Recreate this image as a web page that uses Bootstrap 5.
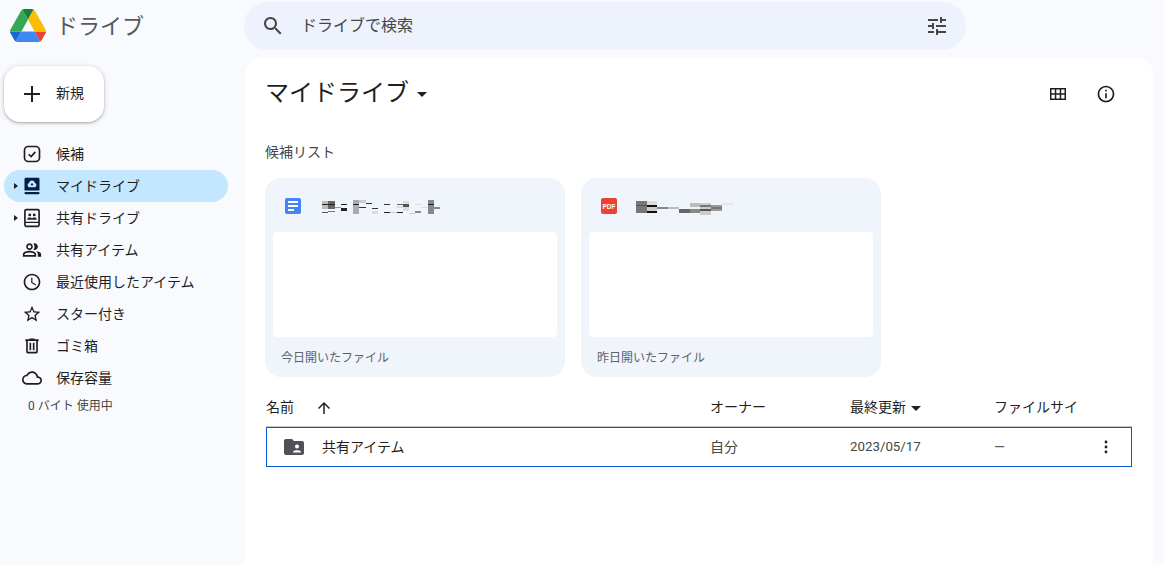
<!DOCTYPE html>
<html lang="ja"><head><meta charset="utf-8"><title>ドライブ</title>
<link href="https://cdn.jsdelivr.net/npm/bootstrap@5.3.0/dist/css/bootstrap.min.css" rel="stylesheet">
<style>
html,body{height:100%;overflow:hidden}
body{background:#f8fafd;color:#1f1f1f;font-family:Roboto,"Noto Sans CJK JP",sans-serif;font-size:14px}
.shell{height:565px;width:1164px}
.topbar{height:58px}
.brand{width:244px;padding-left:10px;padding-bottom:8px}
.brand-name{font-size:22px;color:#555a5f;margin:3px 0 0 10px;line-height:32px}
.searchbar{width:722px;height:48px;margin-top:-6px;background:#edf2fc;border-radius:24px;padding:0 17px 0 17px;color:#444746;font-size:16px}
.searchbar .hint{margin-left:16px;flex:1}
.bodyrow{height:507px}
.sidenav{width:245px;flex:none}
.newbtn{margin:8px 0 16px 4px;width:100px;height:56px;background:#fff;border-radius:16px;box-shadow:0 1px 2px rgba(60,64,67,.3),0 1px 4px 1px rgba(60,64,67,.15);font-size:14px;color:#1f1f1f;padding-left:18px;gap:14px}
.newbtn span{margin-top:-1px}
.sidelink{height:32px;width:224px;margin-left:4px;border-radius:16px;position:relative;padding-left:18px;gap:14px;color:#1f1f1f;text-decoration:none}
.sidelink.on{background:#c2e7ff}
.sideicon{width:20px;height:20px;flex:none;fill:#1f1f1f}
.expander{position:absolute;left:10px;top:13px;width:0;height:0;border-left:4px solid #1f1f1f;border-top:3.5px solid transparent;border-bottom:3.5px solid transparent}
.usage{font-size:12px;color:#444746;margin:3px 0 0 28px}
.panel{width:908px;background:#fff;border-radius:16px 16px 0 0;padding:0 21px;height:507px}
.headline{height:70px}
.headline h1{font-size:24px;font-weight:400;margin:0 0 0 -1px;line-height:70px;color:#1f1f1f}
.ddcaret{display:inline-block;border-top:5px solid #1f1f1f;border-left:5px solid transparent;border-right:5px solid transparent;margin-left:8px;vertical-align:middle}
.toolicons{gap:28px;margin-right:16px;padding-top:2px}
.toolicons svg{width:20px;height:20px;fill:#1f1f1f}
.seclabel{margin:13px 0 0 -1px;line-height:22px;color:#444746}
.cards{gap:16px;margin:15px 0 0 -1px}
.sugcard{width:300px;height:199px;background:#f0f4fb;border-radius:16px;padding:0 8px}
.cardhead{height:54px;padding:2px 0 0 12px}
.cardhead svg.fileicon{width:16px;height:16px;flex:none}
.cardhead svg.mosaic{margin:4px 0 0 21px;width:120px;height:16px}
.cardhead svg.mosaic.pdfmark{margin-left:19px}
.thumb{height:105px;background:#fff;border-radius:4px}
.cardfoot{font-size:12px;color:#5f6368;padding:13px 0 0 8px;line-height:16px}
.filegrid{display:grid;grid-template-columns:444px 140px 144px 1fr;align-items:center}
.listhead{margin-top:12px;height:38px;border-bottom:1px solid #c7c7c7;width:866px;color:#1f1f1f}
.listhead .sortarrow{width:18px;height:18px;fill:#1f1f1f;margin-left:21px}
.caretnear{margin-left:5px}
.listrow{width:866px;height:40px;border:1px solid #0b57d0;color:#444746}
.listrow .firstcell{padding-left:15px;gap:16px;color:#1f1f1f}
.folder{width:24px;height:24px;fill:#4f5256;flex:none}
.listrow .c2{margin-left:-1px}
.listrow .c3{margin-left:-1px;font-size:13.3px}
.dots{width:20px;height:20px;fill:#1f1f1f;margin-left:auto;margin-right:15px}
.dash{margin-left:-1px;color:#5f6368}
</style></head>
<body>
<div class="shell d-flex flex-column">
  <header class="topbar d-flex align-items-center">
    <div class="brand d-flex align-items-center">
      <svg width="36" height="33" viewBox="0 0 87.3 78" preserveAspectRatio="none"><path d="m6.6 66.85 3.85 6.65c.8 1.4 1.95 2.5 3.3 3.3l13.75-23.8h-27.5c0 1.55.4 3.1 1.2 4.5z" fill="#1967d2"/><path d="m43.65 25-13.75-23.8c-1.35.8-2.5 1.9-3.3 3.3l-25.4 44a9.06 9.06 0 0 0 -1.2 4.5h27.5z" fill="#34a853"/><path d="m73.55 76.8c1.35-.8 2.5-1.9 3.3-3.3l1.6-2.75 7.65-13.25c.8-1.4 1.2-2.95 1.2-4.5h-27.502l5.852 11.5z" fill="#ea4335"/><path d="m43.65 25 13.75-23.8c-1.35-.8-2.9-1.2-4.5-1.2h-18.5c-1.6 0-3.15.45-4.5 1.2z" fill="#188038"/><path d="m59.8 53h-32.3l-13.75 23.8c1.35.8 2.9 1.2 4.5 1.2h50.8c1.6 0 3.15-.45 4.5-1.2z" fill="#4285f4"/><path d="m73.4 26.5-12.7-22c-.8-1.4-1.95-2.5-3.3-3.3l-13.75 23.8 16.15 28h27.45c0-1.55-.4-3.1-1.2-4.5z" fill="#fbbc04"/></svg>
      <span class="brand-name">ドライブ</span>
    </div>
    <div class="searchbar d-flex align-items-center">
      <svg width="24" height="24" viewBox="0 0 24 24" fill="#444746"><path d="M15.5 14h-.79l-.28-.27C15.41 12.59 16 11.11 16 9.5 16 5.91 13.09 3 9.5 3S3 5.91 3 9.5 5.91 16 9.5 16c1.61 0 3.09-.59 4.23-1.57l.27.28v.79l5 4.99L20.49 19l-4.99-5zm-6 0C7.01 14 5 11.99 5 9.5S7.01 5 9.5 5 14 7.01 14 9.5 11.99 14 9.5 14z"/></svg>
      <span class="hint">ドライブで検索</span>
      <svg width="24" height="24" viewBox="0 0 24 24" fill="#444746"><path d="M3 17v2h6v-2H3zM3 5v2h10V5H3zm10 16v-2h8v-2h-8v-2h-2v6h2zM7 9v2H3v2h4v2h2V9H7zm14 4v-2H11v2h10zm-6-4h2V7h4V5h-4V3h-2v6z"/></svg>
    </div>
  </header>
  <div class="bodyrow d-flex">
    <aside class="sidenav">
      <div class="newbtn d-flex align-items-center">
        <svg width="20" height="20" viewBox="0 0 20 20"><path d="M10 2v16M2 10h16" stroke="#1f1f1f" stroke-width="2" fill="none"/></svg>
        <span>新規</span>
      </div>
      <nav class="d-flex flex-column">
        <a class="sidelink d-flex align-items-center" href="#"><svg class="sideicon" viewBox="0 0 24 24"><rect x="3" y="3" width="18" height="18" rx="4.500" fill="none" stroke="#1f1f1f" stroke-width="2"/><path d="M8 12.500l3 2.700 5-5.700" fill="none" stroke="#1f1f1f" stroke-width="2"/></svg><span>候補</span></a>
        <a class="sidelink on d-flex align-items-center" href="#"><span class="expander"></span><svg class="sideicon" viewBox="0 0 24 24"><path d="M3 3.500C3 2.700 3.700 2 4.500 2h15c.8 0 1.500.7 1.500 1.500V17.500H3z" fill="#041e49"/><rect x="3" y="19.300" width="18" height="2.500" rx="1" fill="#041e49"/><path d="M12 5.500c2 0 3.300 1.500 3.500 3 1.200.4 1.800 1.400 1.800 2.500 0 1.500-1.200 2.500-2.500 2.500H9.200C7.800 13.500 6.700 12.500 6.700 11c0-1.200.7-2.100 1.800-2.500.2-1.500 1.500-3 3.500-3z" fill="#c2e7ff"/><path d="M12 8l1.800 3.200h-3.600z" fill="#041e49"/></svg><span>マイドライブ</span></a>
        <a class="sidelink d-flex align-items-center" href="#"><span class="expander"></span><svg class="sideicon" viewBox="0 0 24 24"><rect x="3.500" y="2" width="17" height="20" rx="1.500" fill="none" stroke="#1f1f1f" stroke-width="2"/><circle cx="9.300" cy="8.300" r="1.700"/><circle cx="14.700" cy="8.300" r="1.700"/><path d="M6.500 13c0-2 5.500-2 5.500 0 0-2 5.500-2 5.500 0v1.200h-11zM4 16.500h16v1.600H4z"/></svg><span>共有ドライブ</span></a>
        <a class="sidelink d-flex align-items-center" href="#"><svg class="sideicon" viewBox="0 0 24 24"><path d="M16.670 13.130C18.040 14.060 19 15.320 19 17v3h4v-3c0-2.180-3.570-3.470-6.330-3.870zM15 12c2.210 0 4-1.790 4-4s-1.790-4-4-4c-.47 0-.91.1-1.330.24C14.500 5.270 15 6.580 15 8s-.5 2.730-1.330 3.760c.42.14.86.24 1.330.24zM9 12c2.210 0 4-1.790 4-4s-1.790-4-4-4-4 1.790-4 4 1.790 4 4 4zm0-6c1.100 0 2 .9 2 2s-.9 2-2 2-2-.9-2-2 .9-2 2-2zM9 13c-2.670 0-8 1.340-8 4v3h16v-3c0-2.660-5.330-4-8-4zm6 5H3v-.99C3.200 16.290 6.300 15 9 15s5.800 1.290 6 2v1z"/></svg><span>共有アイテム</span></a>
        <a class="sidelink d-flex align-items-center" href="#"><svg class="sideicon" viewBox="0 0 24 24"><path d="M11.990 2C6.470 2 2 6.480 2 12s4.470 10 9.990 10C17.520 22 22 17.520 22 12S17.520 2 11.990 2zM12 20c-4.420 0-8-3.580-8-8s3.580-8 8-8 8 3.580 8 8-3.580 8-8 8zm.5-13H11v6l5.250 3.150.75-1.230-4.500-2.670z"/></svg><span>最近使用したアイテム</span></a>
        <a class="sidelink d-flex align-items-center" href="#"><svg class="sideicon" viewBox="0 0 24 24"><path d="M22 9.240l-7.190-.62L12 2 9.190 8.630 2 9.240l5.460 4.730L5.820 21 12 17.270 18.180 21l-1.630-7.030L22 9.240zM12 15.400l-3.760 2.270 1-4.280-3.320-2.880 4.380-.38L12 6.100l1.710 4.040 4.380.38-3.320 2.880 1 4.280L12 15.400z"/></svg><span>スター付き</span></a>
        <a class="sidelink d-flex align-items-center" href="#"><svg class="sideicon" viewBox="0 0 24 24"><path d="M15 4V3H9v1H4v2h1v13c0 1.100.9 2 2 2h10c1.100 0 2-.9 2-2V6h1V4h-5zm2 15H7V6h10v13zM9 8h2v9H9zm4 0h2v9h-2z"/></svg><span>ゴミ箱</span></a>
        <a class="sidelink d-flex align-items-center" href="#"><svg class="sideicon" viewBox="0 0 24 24"><path d="M19.350 10.040C18.670 6.590 15.640 4 12 4 9.110 4 6.600 5.640 5.350 8.040 2.340 8.360 0 10.910 0 14c0 3.310 2.690 6 6 6h13c2.760 0 5-2.240 5-5 0-2.640-2.050-4.780-4.650-4.960zM19 18H6c-2.210 0-4-1.790-4-4 0-2.050 1.530-3.760 3.560-3.970l1.070-.11.5-.95C8.080 7.140 9.940 6 12 6c2.620 0 4.880 1.860 5.390 4.430l.3 1.500 1.530.11c1.560.1 2.780 1.410 2.780 2.960 0 1.650-1.350 3-3 3z"/></svg><span>保存容量</span></a>
      </nav>
      <div class="usage">0 バイト 使用中</div>
    </aside>
    <main class="panel">
      <div class="headline d-flex align-items-center justify-content-between">
        <h1>マイドライブ<span class="ddcaret"></span></h1>
        <div class="toolicons d-flex align-items-center">
          <svg viewBox="0 0 20 20"><path d="M2 4h16v12H2zM3.500 5.500v3.700h3.300V5.500zm4.800 0v3.700h3.400V5.500zm4.900 0v3.700h3.300V5.500zM3.500 10.800v3.700h3.300v-3.700zm4.800 0v3.700h3.400v-3.700zm4.900 0v3.700h3.300v-3.700z" fill-rule="evenodd"/></svg>
          <svg viewBox="0 0 24 24"><path d="M11 7h2v2h-2zm0 4h2v6h-2zm1-9C6.480 2 2 6.480 2 12s4.480 10 10 10 10-4.480 10-10S17.520 2 12 2zm0 18c-4.410 0-8-3.590-8-8s3.590-8 8-8 8 3.590 8 8-3.590 8-8 8z"/></svg>
        </div>
      </div>
      <p class="seclabel">候補リスト</p>
      <div class="cards d-flex">
        <div class="sugcard">
          <div class="cardhead d-flex align-items-center">
            <svg class="fileicon" viewBox="0 0 16 16"><rect width="16" height="16" rx="2" fill="#4285f4"/><path d="M3 3h10v2H3zM3 7h10v2H3zM3 11h6v2H3z" fill="#fff"/></svg>
            <svg class="mosaic" viewBox="0 0 120 16"><path fill="#bbb" d="M0 1h6v8H0z"/><path fill="#666" d="M6 1h7v8H6z"/><path fill="#222" d="M0 4h13v1H0z"/><path fill="#555" d="M0 12h6v1H0z"/><path fill="#777" d="M6 11h7v1H6z"/><path fill="#999" d="M13 7h6v1h-6z"/><path fill="#222" d="M19 4h6v1h-6zM19 8h6v3h-6z"/><path fill="#aaa" d="M31 0h6v14h-6z"/><path fill="#222" d="M31 4h6v1h-6z"/><path fill="#ccc" d="M37 0h7v3h-7z"/><path fill="#333" d="M37 7h7v1h-7zM44 3h6v1h-6zM50 8h6v1h-6zM62 4h6v1h-6z"/><path fill="#ddd" d="M50 11h6v3h-6z"/><path fill="#222" d="M62 12h6v1h-6zM75 12h6v1h-6z"/><path fill="#ccc" d="M68 12h7v1h-7z"/><path fill="#666" d="M75 4h6v1h-6z"/><path fill="#ddd" d="M75 6h6v2h-6zM81 1h6v10h-6z"/><path fill="#555" d="M81 4h6v3h-6z"/><path fill="#ccc" d="M87 13h6v1h-6z"/><path fill="#ddd" d="M93 4h6v1h-6zM99 7h7v1h-7z"/><path fill="#888" d="M93 11h6v2h-6zM106 0h6v14h-6zM112 7h6v2h-6z"/><path fill="#222" d="M106 4h6v1h-6z"/></svg>
          </div>
          <div class="thumb"></div>
          <div class="cardfoot">今日開いたファイル</div>
        </div>
        <div class="sugcard">
          <div class="cardhead d-flex align-items-center">
            <svg class="fileicon" viewBox="0 0 16 16"><rect width="16" height="16" rx="2" fill="#ea4335"/><text x="8" y="10.500" text-anchor="middle" font-family="Liberation Sans, sans-serif" font-size="6.500" font-weight="700" fill="#fff">PDF</text></svg>
            <svg class="mosaic pdfmark" viewBox="0 0 120 16"><path fill="#777" d="M0 1h11v12H0z"/><path fill="#555" d="M0 5h11v1H0z"/><path fill="#ddd" d="M11 1h10v4H11z"/><path fill="#111" d="M11 5h10v2H11zM11 11h10v2H11z"/><path fill="#ccc" d="M11 7h10v4H11z"/><path fill="#888" d="M21 7h11v2H21z"/><path fill="#bbb" d="M32 7h11v2H32zM54 3h10v4H54z"/><path fill="#666" d="M43 9h11v4H43z"/><path fill="#888" d="M54 9h10v4H54z"/><path fill="#ccc" d="M64 3h11v12H64z"/><path fill="#777" d="M64 5h11v2H64z"/><path fill="#555" d="M64 9h11v2H64z"/><path fill="#999" d="M75 5h11v6H75z"/><path fill="#777" d="M75 7h11v2H75z"/><path fill="#e5e5ee" d="M86 3h11v2H86z"/></svg>
          </div>
          <div class="thumb"></div>
          <div class="cardfoot">昨日開いたファイル</div>
        </div>
      </div>
      <div class="filegrid listhead">
        <div class="d-flex align-items-center"><span>名前</span><svg class="sortarrow" viewBox="0 0 24 24"><path d="M4 12l1.410 1.410L11 7.830V20h2V7.830l5.580 5.590L20 12l-8-8-8 8z"/></svg></div>
        <div>オーナー</div>
        <div>最終更新<span class="ddcaret caretnear"></span></div>
        <div>ファイルサイ</div>
      </div>
      <div class="filegrid listrow">
        <div class="firstcell d-flex align-items-center"><svg class="folder" viewBox="0 0 24 24"><path d="M10 4H4c-1.100 0-2 .9-2 2v12c0 1.100.9 2 2 2h16c1.100 0 2-.9 2-2V8c0-1.100-.9-2-2-2h-8l-2-2z"/><circle cx="15" cy="11.500" r="2" fill="#fff"/><path d="M11 17c0-2.200 8-2.200 8 0v.5h-8z" fill="#fff"/></svg><span>共有アイテム</span></div>
        <div class="c2">自分</div>
        <div class="c3">2023/05/17</div>
        <div class="d-flex align-items-center"><span class="dash">—</span><svg class="dots" viewBox="0 0 24 24"><circle cx="12" cy="6" r="1.700"/><circle cx="12" cy="12" r="1.700"/><circle cx="12" cy="18" r="1.700"/></svg></div>
      </div>
    </main>
  </div>
</div>
</body></html>
